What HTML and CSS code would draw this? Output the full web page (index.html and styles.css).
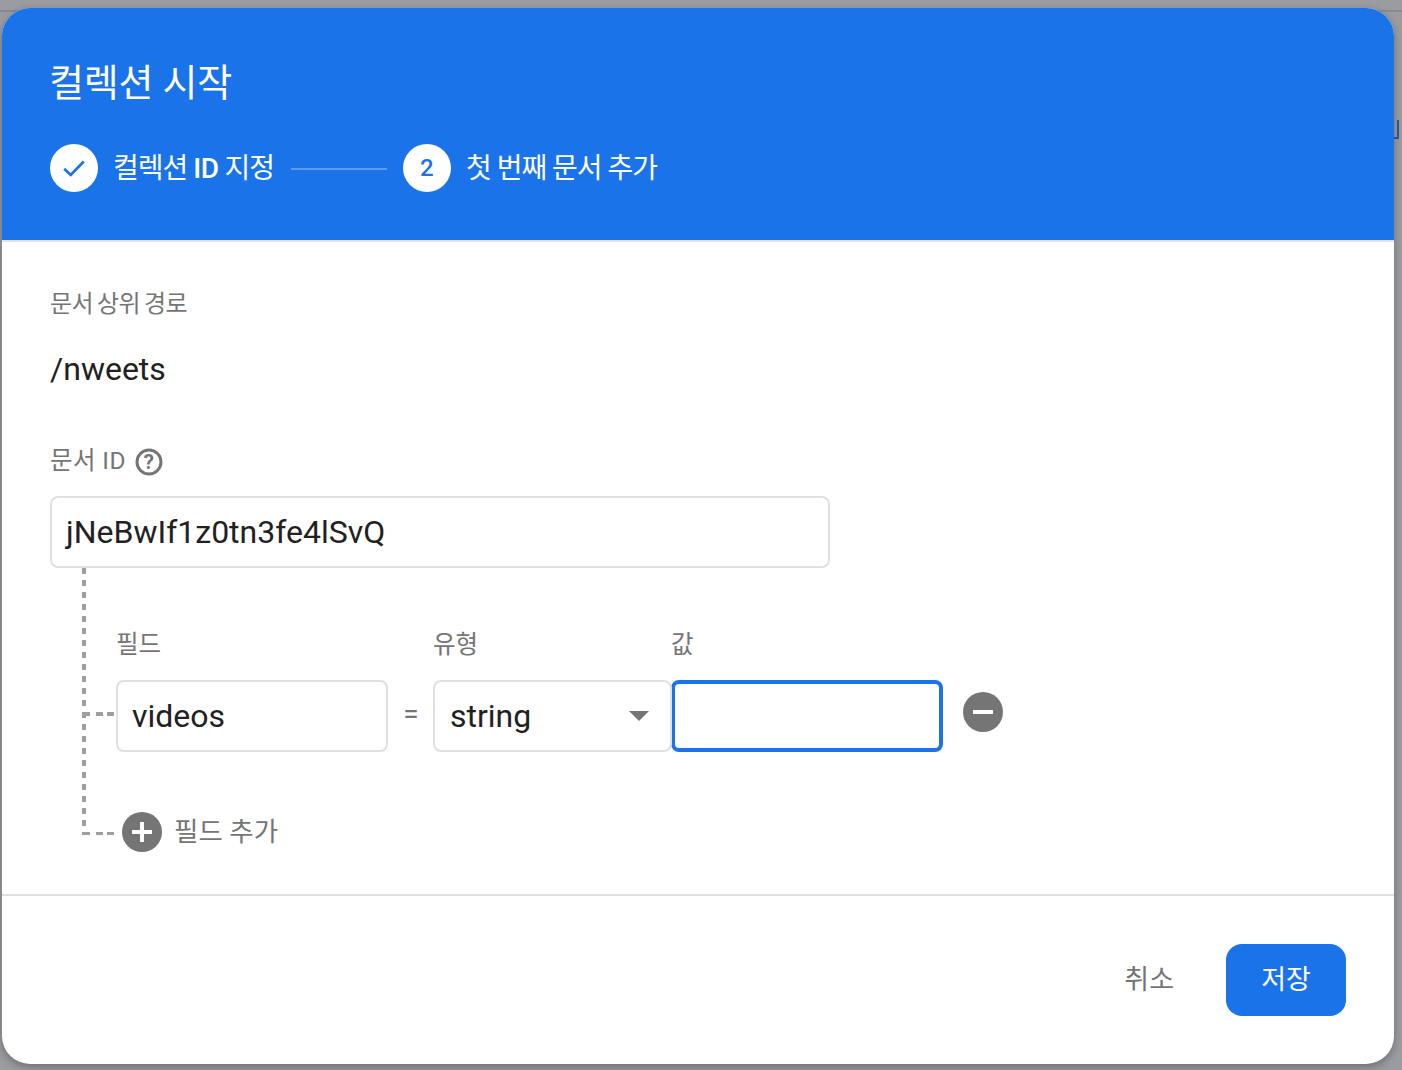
FILE: index.html
```html
<!DOCTYPE html>
<html lang="ko">
<head>
<meta charset="utf-8">
<title>컬렉션 시작</title>
<link rel="stylesheet" href="styles.css">
</head>
<body>
<div class="backdrop-line"></div>
<div class="backdrop-glyph"></div>
<main class="dialog">
  <header class="head">
    <h1 class="title">컬렉션 시작</h1>
    <div class="stepper">
      <span class="step-dot">
        <svg width="30" height="30" viewBox="0 0 24 24"><path d="M4.2 12.6 9.4 17.6 19.8 6.8" fill="none" stroke="#1a73e8" stroke-width="2.1"/></svg>
      </span>
      <span class="step-label">컬렉션 <span class="step-id">ID</span> 지정</span>
      <span class="step-line"></span>
      <span class="step-dot step-num">2</span>
      <span class="step-label">첫 번째 문서 추가</span>
    </div>
  </header>
  <section class="content">
    <div class="label path-label">문서 상위 경로</div>
    <div class="path">/nweets</div>
    <div class="label id-label">문서 ID
      <svg class="help" width="30" height="30" viewBox="0 0 30 30"><circle cx="15" cy="15" r="12" fill="none" stroke="#757575" stroke-width="3"/><text x="15" y="22" text-anchor="middle" class="help-mark">?</text></svg>
    </div>
    <div class="input id-input">jNeBwIf1z0tn3fe4lSvQ</div>
    <div class="tree">
      <div class="field-grid">
        <div class="label col-field">필드</div>
        <div class="label col-type">유형</div>
        <div class="label col-value">값</div>
      </div>
      <div class="field-row">
        <div class="input field-name">videos</div>
        <span class="equals">=</span>
        <div class="input field-type">string<span class="caret"></span></div>
        <div class="input field-value"></div>
        <span class="round-btn remove"><span class="bar"></span></span>
      </div>
      <div class="add-row">
        <span class="round-btn add"><span class="bar"></span><span class="bar bar-v"></span></span>
        <span class="add-text">필드 추가</span>
      </div>
    </div>
  </section>
  <footer class="foot">
    <span class="cancel">취소</span>
    <span class="save">저장</span>
  </footer>
</main>
</body>
</html>
```
FILE: styles.css
```css
* { box-sizing: border-box; }
html, body { margin: 0; height: 1070px; overflow: hidden; }
body {
  position: relative;
  background: #9a9ca1;
  padding: 8px 8px 6px 2px;
  font-family: Roboto, "Noto Sans CJK KR", sans-serif;
  color: #212121;
}
.backdrop-line { position: absolute; left: 0; right: 0; top: 10px; height: 2px; background: #8a8b90; }
.backdrop-glyph { position: absolute; left: 1394px; top: 120px; width: 5px; height: 19px; border-right: 2px solid #2f5a9c; border-bottom: 2px solid #2f5a9c; }
.dialog {
  position: relative;
  height: 1056px;
  background: #fff;
  border-radius: 28px;
  overflow: hidden;
  display: flex;
  flex-direction: column;
  box-shadow: 0 3px 8px rgba(0,0,0,.3);
}
.head {
  height: 234px;
  flex: none;
  background: #1a73e8;
  border-bottom: 2px solid #dfe3e8;
  padding: 51px 48px 0;
  color: #fff;
}
.title { margin: 0 0 0 -1px; font-size: 38px; line-height: 48px; font-weight: 400; letter-spacing: -.2px; }
.stepper { display: flex; align-items: center; margin-top: 37px; height: 48px; }
.step-dot {
  width: 48px; height: 48px; border-radius: 50%;
  background: #fff; color: #1a73e8;
  display: flex; align-items: center; justify-content: center; flex: none;
  font-size: 24px; font-weight: 500;
}
.step-label { margin-left: 15px; font-size: 28px; font-weight: 400; line-height: 40px; margin-top: 2px; letter-spacing: -1px; }
.step-id { font-weight: 500; letter-spacing: -.5px; }
.step-line { width: 96px; height: 2px; background: #5f9bee; margin: 2px 16px 0 17px; }
.content { flex: 1; padding: 45px 48px 0; }
.label { font-size: 24.5px; line-height: 34px; color: #757575; }
.path-label { font-size: 24px; letter-spacing: -.5px; word-spacing: -1.6px; }
.path { font-size: 32px; line-height: 44px; margin-top: 26px; }
.id-label { margin-top: 52px; display: flex; align-items: center; gap: 8px; height: 36px; letter-spacing: .4px; }
.help { flex: none; margin-top: 2px; }
.help-mark { font-size: 21px; font-weight: 700; fill: #757575; font-family: Roboto, sans-serif; }
.input {
  height: 72px;
  border: 2px solid #e0e0e0;
  border-radius: 8px;
  background: #fff;
  font-size: 32px;
  padding: 0 14px;
  display: flex;
  align-items: center;
}
.id-input { width: 780px; margin-top: 17px; }
.tree {
  position: relative;
  margin-left: 32px;
  padding: 60px 0 0 34px;
  height: 267px;
  background-image:
    repeating-linear-gradient(to bottom, #9e9e9e 0 6px, transparent 6px 12px),
    linear-gradient(to right, #9e9e9e 0 8px, transparent 8px 14px, #9e9e9e 14px 21px, transparent 21px 25px, #9e9e9e 25px 32px),
    linear-gradient(to right, #9e9e9e 0 8px, transparent 8px 14px, #9e9e9e 14px 21px, transparent 21px 25px, #9e9e9e 25px 32px);
  background-repeat: no-repeat;
  background-size: 4px 267px, 32px 4px, 32px 4px;
  background-position: 0 0, 0 144px, 0 264px;
}
.field-grid { display: flex; }
.col-field { width: 317px; }
.col-type { width: 238px; }
.field-row { display: flex; align-items: center; margin-top: 18px; height: 72px; }
.field-name { width: 272px; }
.equals { width: 45px; text-align: center; color: #757575; font-size: 28px; margin-top: -6px; padding-left: 1px; }
.field-type { width: 239px; position: relative; padding-left: 15px; }
.caret {
  position: absolute; right: 21px; top: 29px;
  border-left: 10.5px solid transparent; border-right: 10.5px solid transparent;
  border-top: 10px solid #757575;
}
.field-value { width: 272px; margin-left: -1px; border: 4px solid #1a73e8; }
.round-btn {
  position: relative;
  width: 40px; height: 40px; border-radius: 50%; background: #757575; flex: none;
  display: block;
}
.bar { position: absolute; left: 10px; top: 18px; width: 20px; height: 4px; background: #fff; }
.bar-v { left: 18px; top: 10px; width: 4px; height: 20px; }
.remove { margin-left: 20px; margin-top: -8px; }
.add-row { display: flex; align-items: center; margin-top: 60px; margin-left: 6px; height: 40px; }
.add-text { font-size: 26.5px; color: #757575; margin-left: 12px; margin-top: -6px; }
.foot {
  flex: none;
  height: 170px;
  border-top: 2px solid #e0e0e0;
  padding: 0 48px;
  display: flex;
  align-items: center;
  justify-content: flex-end;
}
.cancel { font-size: 27px; color: #757575; margin-right: 52px; margin-top: -6px; }
.save {
  width: 120px; height: 72px; border-radius: 16px; background: #1a73e8; color: #fff;
  font-size: 27px; display: flex; align-items: center; justify-content: center; padding-bottom: 6px;
}
```
